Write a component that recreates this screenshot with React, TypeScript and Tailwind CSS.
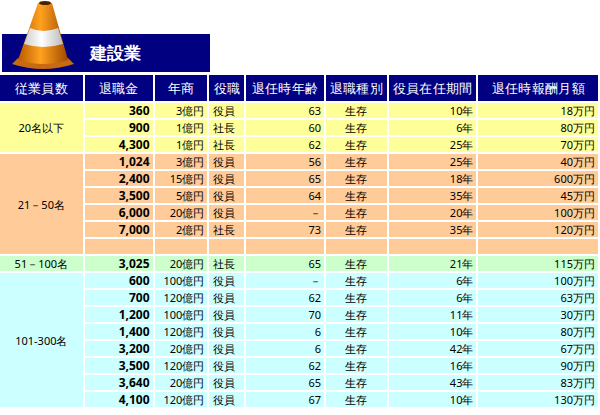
const groups = [
  {
    label: "20名以下",
    bg: "bg-[#ffff99]",
    rows: [
      ["360", "3億円", "役員", "63", "生存", "10年", "18万円"],
      ["900", "1億円", "社長", "60", "生存", "6年", "80万円"],
      ["4,300", "1億円", "社長", "62", "生存", "25年", "70万円"],
    ],
  },
  {
    label: "21－50名",
    bg: "bg-[#ffcc99]",
    rows: [
      ["1,024", "3億円", "役員", "56", "生存", "25年", "40万円"],
      ["2,400", "15億円", "役員", "65", "生存", "18年", "600万円"],
      ["3,500", "5億円", "役員", "64", "生存", "35年", "45万円"],
      ["6,000", "20億円", "役員", "－", "生存", "20年", "100万円"],
      ["7,000", "2億円", "社長", "73", "生存", "35年", "120万円"],
      ["", "", "", "", "", "", ""],
    ],
  },
  {
    label: "51－100名",
    bg: "bg-[#ccffcc]",
    rows: [["3,025", "20億円", "社長", "65", "生存", "21年", "115万円"]],
  },
  {
    label: "101-300名",
    bg: "bg-[#ccffff]",
    rows: [
      ["600", "100億円", "役員", "－", "生存", "6年", "100万円"],
      ["700", "120億円", "役員", "62", "生存", "6年", "63万円"],
      ["1,200", "100億円", "役員", "70", "生存", "11年", "30万円"],
      ["1,400", "120億円", "役員", "6", "生存", "10年", "80万円"],
      ["3,200", "20億円", "役員", "6", "生存", "42年", "67万円"],
      ["3,500", "120億円", "役員", "62", "生存", "16年", "90万円"],
      ["3,640", "20億円", "役員", "65", "生存", "43年", "83万円"],
      ["4,100", "120億円", "役員", "67", "生存", "10年", "130万円"],
    ],
  },
];

const heads = ["従業員数", "退職金", "年商", "役職", "退任時年齢", "退職種別", "役員在任期間", "退任時報酬月額"];
const widths = ["w-[83px]", "w-[68px]", "w-[53px]", "w-[35px]", "w-[78px]", "w-[61px]", "w-[88px]", "w-[120px]"];
const align = ["text-right", "text-right", "text-left", "text-right", "text-center", "text-right", "text-right"];

function Cone() {
  return (
    <svg width="70" height="72" viewBox="0 0 70 72" className="absolute left-[8px] top-0">
      <defs>
        <linearGradient id="o" x1="0" x2="1">
          <stop offset="0" stopColor="#b85a00" />
          <stop offset="0.45" stopColor="#ffa21f" />
          <stop offset="1" stopColor="#a04800" />
        </linearGradient>
        <linearGradient id="w" x1="0" x2="1">
          <stop offset="0" stopColor="#ccc" />
          <stop offset="0.45" stopColor="#fff" />
          <stop offset="1" stopColor="#bbb" />
        </linearGradient>
      </defs>
      <path d="M4 64 Q35 74 66 64 L60 58 L10 58 Z" fill="#c86a10" />
      <path d="M37 2 L44 3 L60 60 Q35 68 10 60 L30 3 Z" fill="url(#o)" />
      <path d="M22 28 Q35 34 50 28 L55 44 Q35 50 16 44 Z" fill="url(#w)" />
      <ellipse cx="37" cy="3" rx="6" ry="2" fill="#4a2000" />
    </svg>
  );
}

export default function App() {
  return (
    <div className="w-[600px] h-[415px] overflow-hidden bg-white font-['Noto_Sans_CJK_JP',sans-serif]">
      <div className="relative h-[75px]">
        <div className="absolute left-[2px] top-[34px] w-[208px] h-[38px] bg-[#000080] flex items-center pl-[88px] text-white font-bold text-[17px]">
          建設業
        </div>
        <Cone />
      </div>
      <table className="border-separate border-spacing-[2px] -mt-[2px] -ml-[2px] text-[11px] leading-[15px] text-black">
        <thead>
          <tr>
            {heads.map((h, i) => (
              <th key={h} className={`${widths[i]} h-[26px] bg-[#000080] text-white font-normal text-[12.5px] tracking-wide p-0`}>
                {h}
              </th>
            ))}
          </tr>
        </thead>
        <tbody>
          {groups.map((g) =>
            g.rows.map((r, ri) => (
              <tr key={g.label + ri}>
                {ri === 0 && (
                  <td rowSpan={g.rows.length} className={`${g.bg} text-center p-0`}>
                    {g.label}
                  </td>
                )}
                {r.map((c, ci) => (
                  <td
                    key={ci}
                    className={`${g.bg} h-[15px] p-0 px-[3px] ${align[ci]} ${ci === 0 ? "font-bold text-[12px] font-['Liberation_Sans',sans-serif]" : ""} ${ci === 2 ? "pl-[4px]" : ""}`}
                  >
                    {c}
                  </td>
                ))}
              </tr>
            ))
          )}
        </tbody>
      </table>
    </div>
  );
}
